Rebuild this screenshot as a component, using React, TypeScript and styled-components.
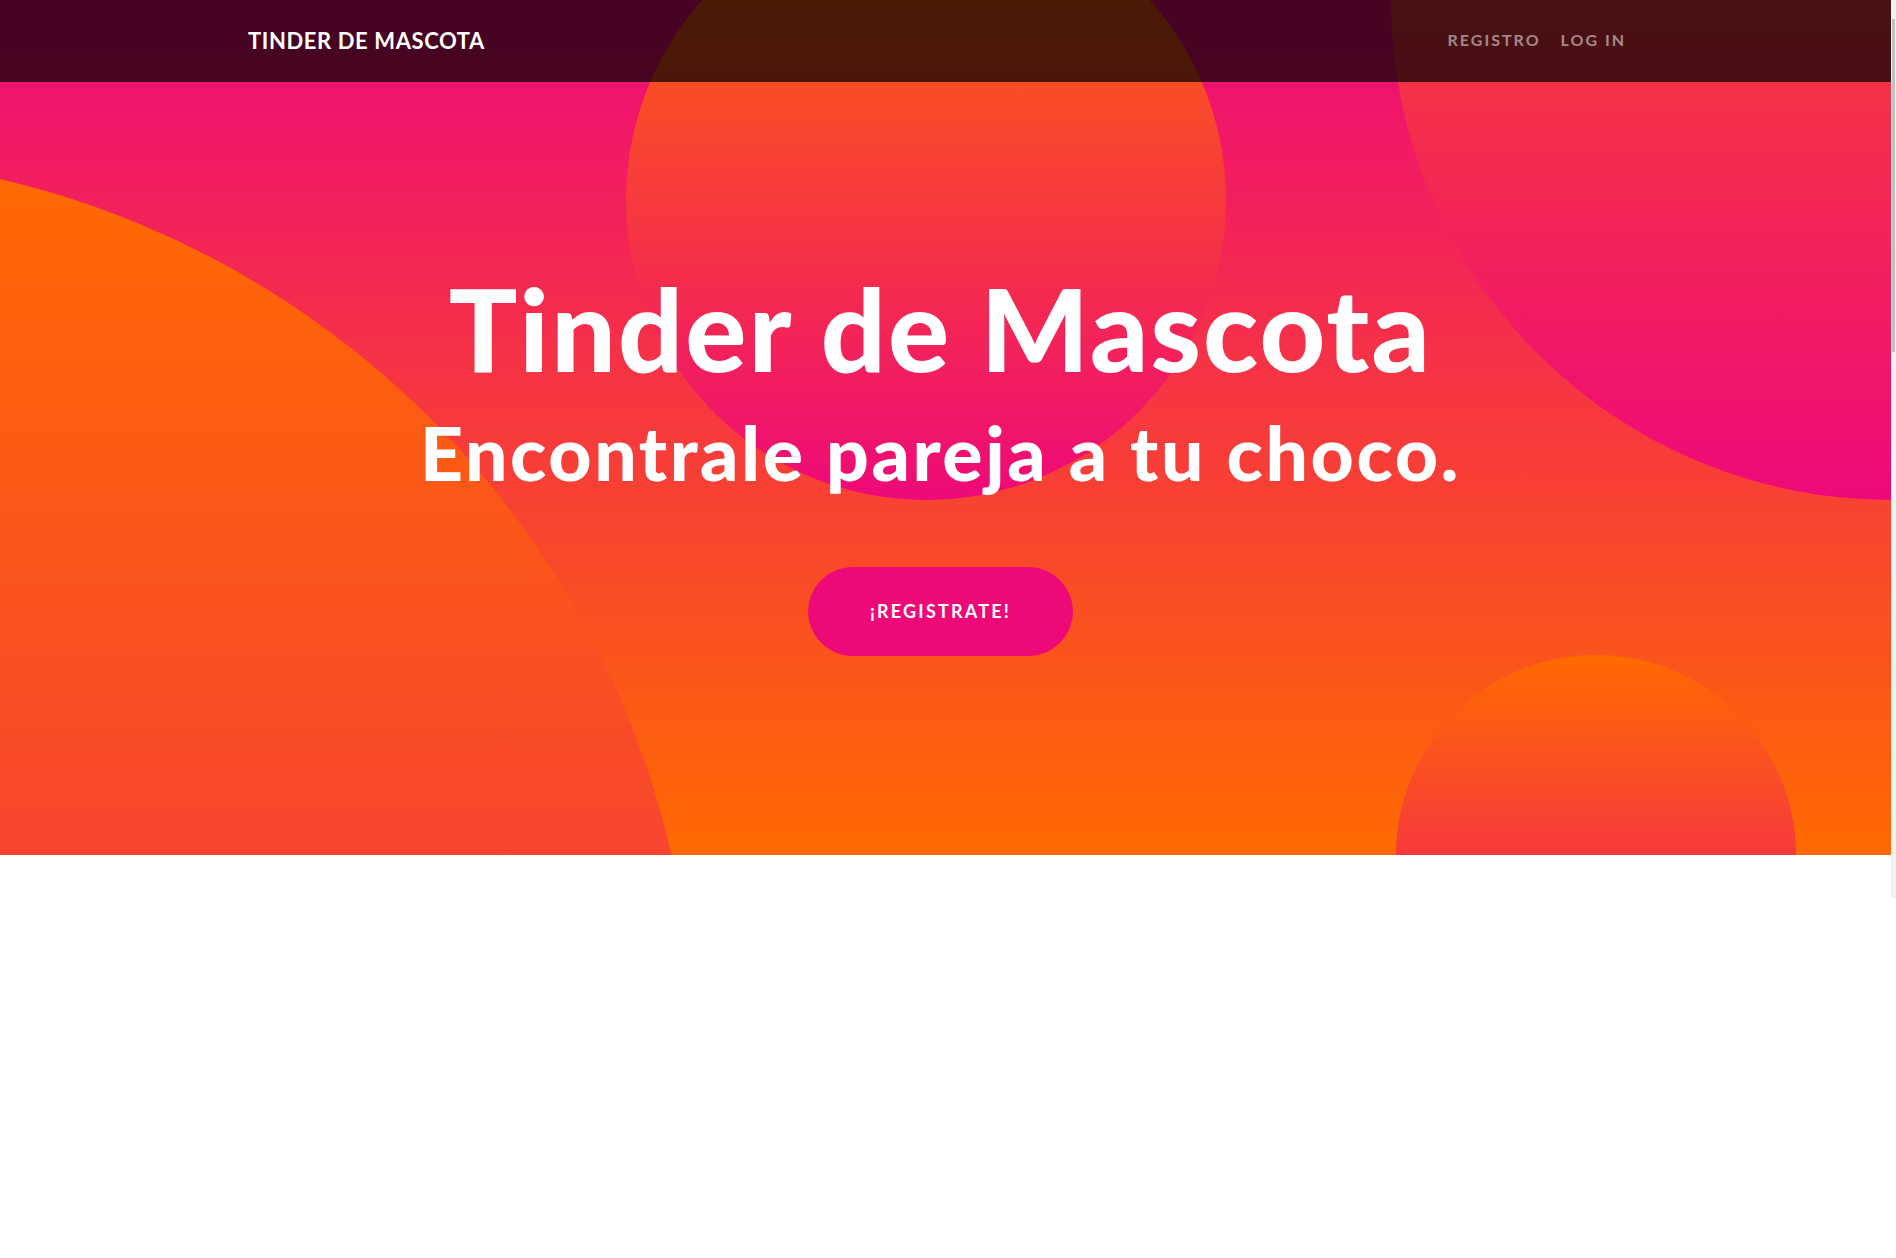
import React from "react";
import styled, { createGlobalStyle } from "styled-components";

const GlobalStyle = createGlobalStyle`
  html, body {
    margin: 0;
    padding: 0;
    background: #ffffff;
  }
  body {
    font-family: Lato, "Liberation Sans", sans-serif;
  }
  *, *::before, *::after {
    box-sizing: border-box;
  }
`;

const Page = styled.div`
  display: flex;
  align-items: flex-start;
  width: 100%;
  min-height: 1258px;
  background: #ffffff;
`;

const Main = styled.div`
  position: relative;
  flex: 1;
  min-width: 0;
`;

const NavBar = styled.nav`
  position: absolute;
  top: 0;
  left: 0;
  right: 0;
  z-index: 10;
  height: 82px;
  display: flex;
  align-items: center;
  justify-content: space-between;
  padding: 0 255px 0 248px;
  background: rgba(0, 0, 0, 0.7);
`;

const Brand = styled.a`
  font-family: Lato, "Liberation Sans", sans-serif;
  font-weight: 700;
  font-size: 22px;
  line-height: 1;
  letter-spacing: 0.6px;
  color: #ffffff;
  text-transform: uppercase;
  text-decoration: none;
`;

const NavList = styled.ul`
  display: flex;
  list-style: none;
  margin: -2px 0 0;
  padding: 0;
`;

const NavLink = styled.a`
  display: block;
  padding: 0 10px;
  font-family: Lato, "Liberation Sans", sans-serif;
  font-weight: 700;
  font-size: 16px;
  line-height: 1;
  letter-spacing: 2px;
  color: rgba(255, 255, 255, 0.5);
  text-transform: uppercase;
  text-decoration: none;
`;

const Masthead = styled.header`
  position: relative;
  overflow: hidden;
  padding: 269px 10px 199px 0;
  text-align: center;
  background: linear-gradient(0deg, #ff6a00 0%, #ee0979 100%);
`;

const Circle = styled.div<{
  $size: number;
  $top?: string;
  $bottom?: string;
  $left?: string;
  $right?: string;
}>`
  position: absolute;
  z-index: 0;
  width: ${(p) => p.$size}px;
  height: ${(p) => p.$size}px;
  border-radius: 50%;
  background: linear-gradient(0deg, #ee0979 0%, #ff6a00 100%);
  ${(p) => (p.$top !== undefined ? `top: ${p.$top};` : "")}
  ${(p) => (p.$bottom !== undefined ? `bottom: ${p.$bottom};` : "")}
  ${(p) => (p.$left !== undefined ? `left: ${p.$left};` : "")}
  ${(p) => (p.$right !== undefined ? `right: ${p.$right};` : "")}
`;

const Content = styled.div`
  position: relative;
  z-index: 1;
  display: flex;
  flex-direction: column;
  align-items: center;
`;

const Heading = styled.h1`
  margin: 0;
  font-family: Lato, "Liberation Sans", sans-serif;
  font-weight: 900;
  font-size: 114px;
  line-height: 118px;
  letter-spacing: 2.2px;
  color: #ffffff;
`;

const Subheading = styled.h2`
  margin: 0;
  font-family: Lato, "Liberation Sans", sans-serif;
  font-weight: 900;
  font-size: 75px;
  line-height: 130px;
  letter-spacing: 2.6px;
  color: #ffffff;
`;

const CtaButton = styled.a`
  display: inline-block;
  margin-top: 50px;
  padding: 30px 61px;
  border: 1px solid #ee0979;
  border-radius: 999px;
  background: #ee0979;
  font-family: Lato, "Liberation Sans", sans-serif;
  font-weight: 700;
  font-size: 18px;
  line-height: 27px;
  letter-spacing: 2.2px;
  color: #ffffff;
  text-transform: uppercase;
  text-decoration: none;
`;

const ScrollTrack = styled.div`
  flex: 0 0 5px;
  width: 5px;
  height: 898px;
  padding: 19px 1px 0 1px;
  background: #f1f1f1;
`;

const ScrollThumb = styled.div`
  width: 3px;
  height: 333px;
  background: #c1c1c1;
`;

export default function App() {
  return (
    <>
      <GlobalStyle />
      <Page>
        <Main>
          <NavBar>
            <Brand href="#">Tinder de Mascota</Brand>
            <NavList>
              <li>
                <NavLink href="#">Registro</NavLink>
              </li>
              <li>
                <NavLink href="#">Log In</NavLink>
              </li>
            </NavList>
          </NavBar>
          <Masthead>
            <Circle $size={1800} $bottom="-1100px" $left="-1106px" />
            <Circle $size={1000} $top="-500px" $right="-500px" />
            <Circle $size={400} $bottom="-200px" $right="5%" />
            <Circle $size={600} $top="-100px" $right="calc(35% + 3px)" />
            <Content>
              <Heading>Tinder de Mascota</Heading>
              <Subheading>Encontrale pareja a tu choco.</Subheading>
              <CtaButton href="#">¡Registrate!</CtaButton>
            </Content>
          </Masthead>
        </Main>
        <ScrollTrack>
          <ScrollThumb />
        </ScrollTrack>
      </Page>
    </>
  );
}
